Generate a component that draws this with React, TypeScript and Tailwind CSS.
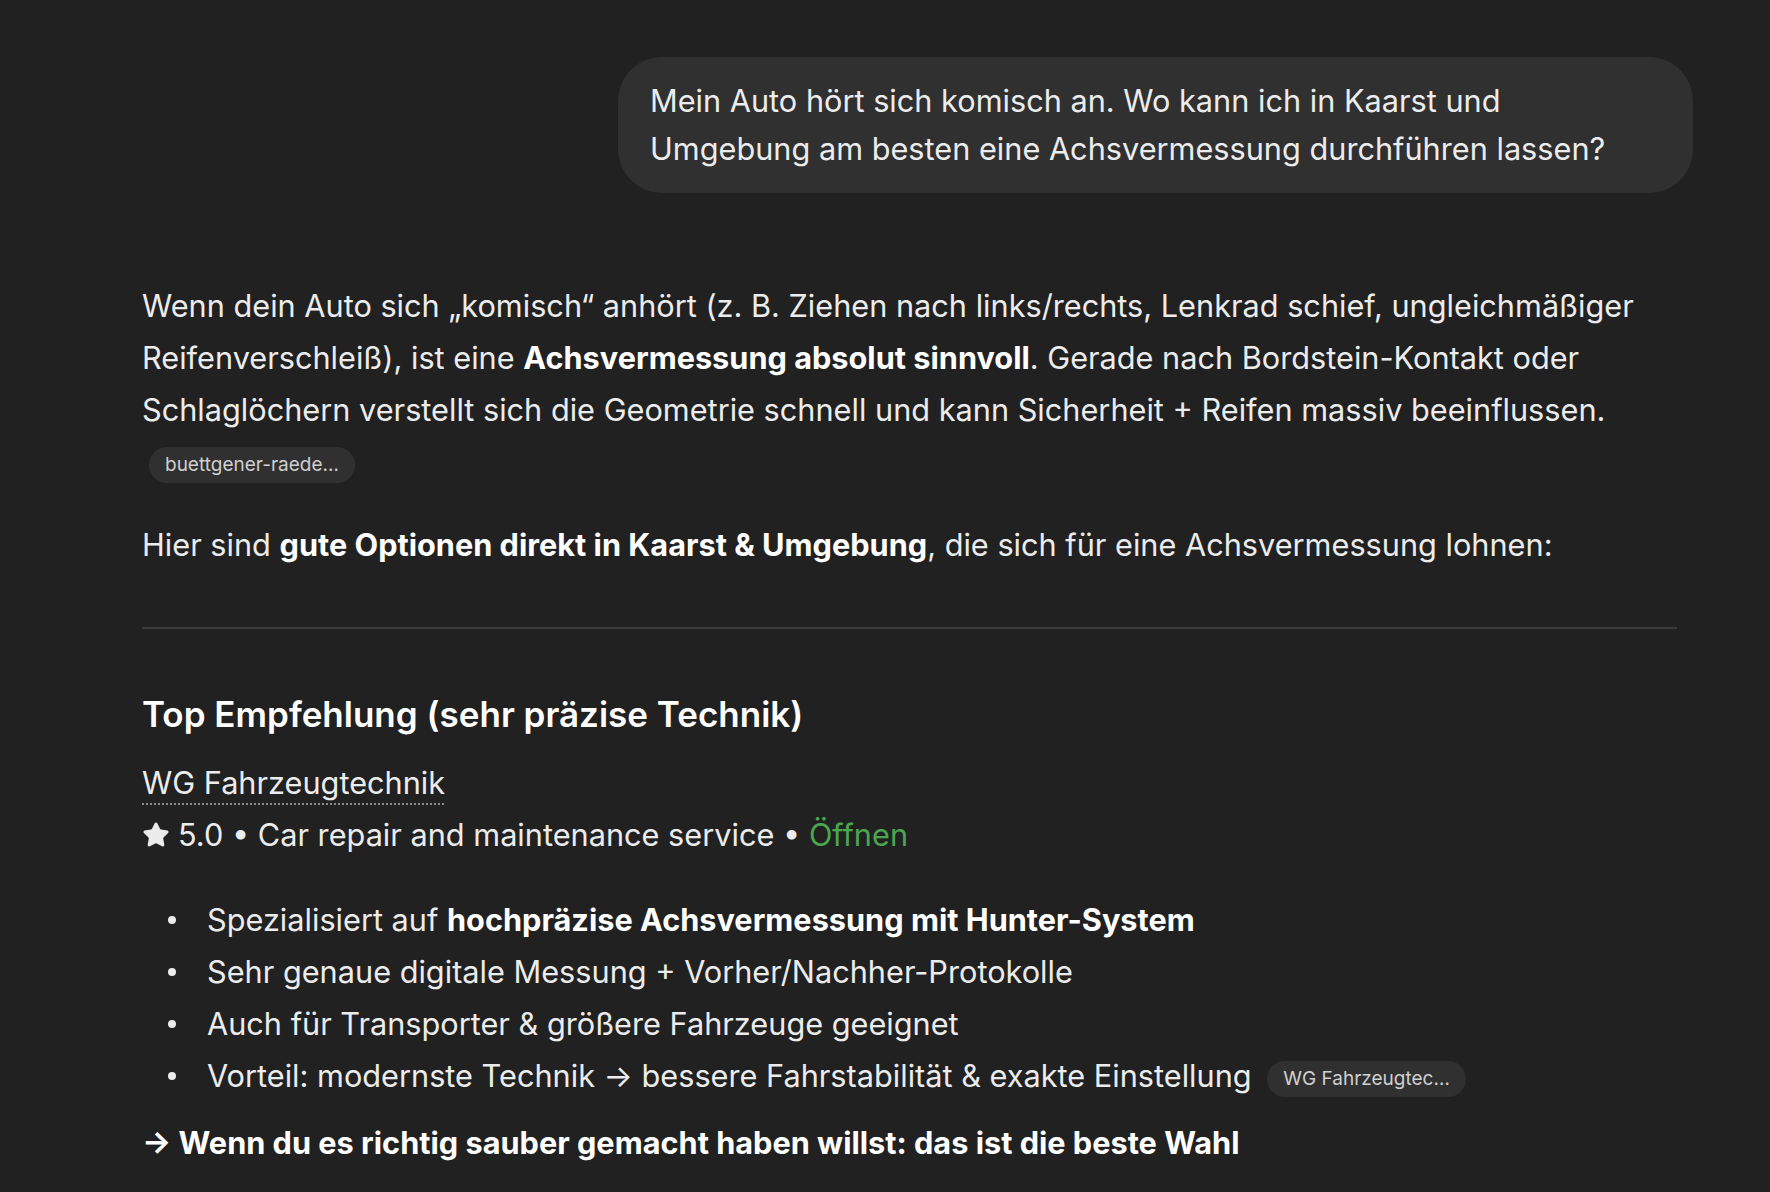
import { Star } from 'lucide-react';

function SourcePill({ label }: { label: string }) {
  return (
    <span className="ml-[7px] inline-flex h-[36px] items-center rounded-full bg-[#303030] px-[16px] align-middle text-[19px] leading-none text-[#cfcfcf]">
      {label}
    </span>
  );
}

function Bullet({ children }: { children: React.ReactNode }) {
  return (
    <li className="flex items-center">
      <span className="ml-[26px] mr-[31px] h-[8px] w-[8px] shrink-0 rounded-full bg-[#ececec]" />
      <span>{children}</span>
    </li>
  );
}

export default function App() {
  return (
    <div className="min-h-screen bg-[#212121] font-['Inter',sans-serif] text-[#ececec]">
      <div className="pl-[142px] pr-[77px] pt-[57px]">
        {/* User message */}
        <div className="flex justify-end">
          <div className="w-[1075px] rounded-[44px] bg-[#303030] py-[20px] pl-[32px] pr-[60px] text-[30.7px] leading-[48px]">
            Mein Auto hört sich komisch an. Wo kann ich in Kaarst und Umgebung am besten eine
            Achsvermessung durchführen lassen?
          </div>
        </div>

        {/* Assistant answer */}
        <div className="mt-[87px] w-[1535px] text-[30.7px] leading-[52px]">
          <p>
            Wenn dein Auto sich „komisch“ anhört (z. B. Ziehen nach links/rechts, Lenkrad schief,
            ungleichmäßiger Reifenverschleiß), ist eine{' '}
            <strong className="font-bold text-white">Achsvermessung absolut sinnvoll</strong>.
            Gerade nach Bordstein-Kontakt oder Schlaglöchern verstellt sich die Geometrie schnell
            und kann Sicherheit + Reifen massiv beeinflussen. <SourcePill label="buettgener-raede…" />
          </p>

          <p className="mt-[31px]">
            Hier sind{' '}
            <strong className="font-bold text-white">gute Optionen direkt in Kaarst &amp; Umgebung</strong>,
            die sich für eine Achsvermessung lohnen:
          </p>

          <hr className="mt-[56px] border-t-2 border-[#3a3a3a]" />

          <h3 className="mt-[60px] text-[35px] font-semibold leading-[50px] text-white">
            Top Empfehlung (sehr präzise Technik)
          </h3>

          <div className="mt-[18px]">
            <span className="underline decoration-[#8c8c8c] decoration-dotted decoration-2 underline-offset-[9px]">
              WG Fahrzeugtechnik
            </span>
          </div>
          <div className="flex items-center">
            <Star className="mr-[8px] h-[28px] w-[28px]" fill="#ececec" strokeWidth={1.5} />
            <span>
              5.0 • Car repair and maintenance service • <span className="text-[#4aa64f]">Öffnen</span>
            </span>
          </div>

          <ul className="mt-[33px]">
            <Bullet>
              Spezialisiert auf{' '}
              <strong className="font-bold text-white">hochpräzise Achsvermessung mit Hunter-System</strong>
            </Bullet>
            <Bullet>Sehr genaue digitale Messung + Vorher/Nachher-Protokolle</Bullet>
            <Bullet>Auch für Transporter &amp; größere Fahrzeuge geeignet</Bullet>
            <Bullet>
              Vorteil: modernste Technik → bessere Fahrstabilität &amp; exakte Einstellung{' '}
              <SourcePill label="WG Fahrzeugtec…" />
            </Bullet>
          </ul>

          <p className="mt-[15px] font-bold text-white">
            → Wenn du es richtig sauber gemacht haben willst: das ist die beste Wahl
          </p>
        </div>
      </div>
    </div>
  );
}
